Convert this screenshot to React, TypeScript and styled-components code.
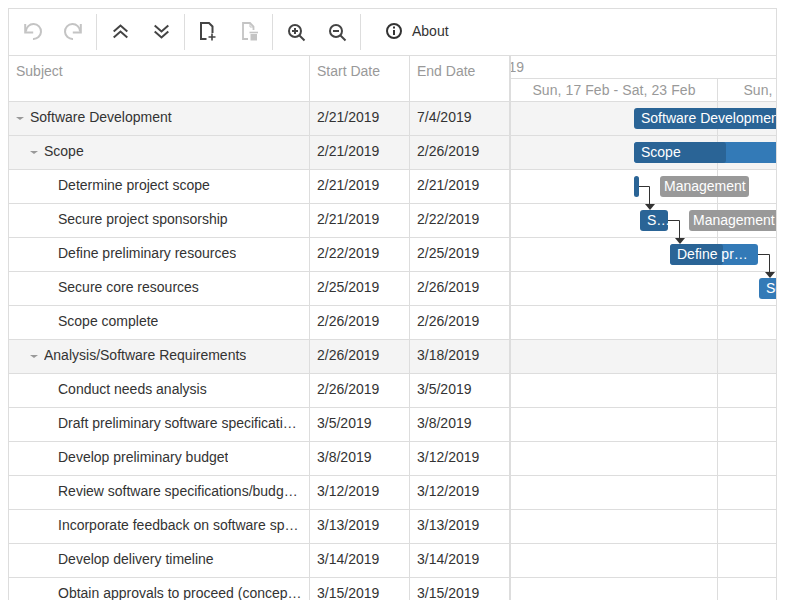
import React from 'react';
import styled, { createGlobalStyle } from 'styled-components';

const GlobalStyle = createGlobalStyle`
  html, body {
    height: 100%;
    margin: 0;
    overflow: hidden;
    background: #fff;
  }
  body {
    padding: 8px;
    box-sizing: border-box;
    font-family: "Liberation Sans", Arial, sans-serif;
    font-size: 14px;
    color: #333;
  }
`;

const Shell = styled.div`
  width: 769px;
  height: 700px;
  box-sizing: border-box;
  border: 1px solid #ddd;
`;

const Toolbar = styled.div`
  height: 47px;
  box-sizing: border-box;
  display: flex;
  align-items: center;
  border-bottom: 1px solid #ddd;
`;

const ToolGroup = styled.div`
  display: flex;
  height: 36px;
  padding: 0 2px 0 3px;
  border-right: 1px solid #ddd;
`;

const ToolButton = styled.div<{ $off?: boolean }>`
  width: 41px;
  padding-bottom: 1px;
  box-sizing: border-box;
  display: flex;
  align-items: center;
  justify-content: center;
  color: ${p => (p.$off ? '#c4c4c4' : '#444')};
`;

const AboutButton = styled.div`
  display: flex;
  align-items: center;
  gap: 9px;
  margin-left: 24px;
  padding-bottom: 2px;
  color: #333;
`;

const Body = styled.div`
  display: flex;
`;

const GridPane = styled.div`
  width: 500px;
  flex: none;
`;

const Splitter = styled.div`
  width: 2px;
  flex: none;
  background: #ddd;
`;

const RowLine = styled.div<{ $group?: boolean; $head?: boolean }>`
  display: grid;
  grid-template-columns: 301px 100px 99px;
  height: ${p => (p.$head ? '46px' : '34px')};
  box-sizing: border-box;
  border-bottom: 1px solid #ddd;
  background: ${p => (p.$group ? '#f4f4f4' : '#fff')};
`;

const Cell = styled.div<{ $head?: boolean; $last?: boolean }>`
  display: flex;
  align-items: flex-start;
  min-width: 0;
  padding: 7px 7px 0;
  line-height: 16px;
  box-sizing: border-box;
  border-right: ${p => (p.$last ? 'none' : '1px solid #ddd')};
  color: ${p => (p.$head ? '#999' : '#333')};
`;

const SubjectCell = styled(Cell)<{ $level: number }>`
  padding-left: ${p => 7 + p.$level * 14}px;
`;

const Caret = styled.span`
  flex: none;
  width: 0;
  height: 0;
  margin: 8px 6px 0 0;
  border-left: 4px solid transparent;
  border-right: 4px solid transparent;
  border-top: 3px solid #999;
`;

const CellText = styled.span`
  min-width: 0;
  white-space: nowrap;
  overflow: hidden;
  text-overflow: ellipsis;
`;

const ChartPane = styled.div`
  position: relative;
  flex: 1;
  min-width: 0;
  overflow: hidden;
`;

const TierTop = styled.div`
  height: 23px;
  box-sizing: border-box;
  border-bottom: 1px solid #ddd;
  color: #999;
  line-height: 22px;
`;

const YearClip = styled.div`
  width: 13px;
  display: flex;
  justify-content: flex-end;
  overflow: hidden;
`;

const TierBottom = styled.div`
  height: 23px;
  box-sizing: border-box;
  display: grid;
  grid-template-columns: repeat(2, 207px);
  border-bottom: 1px solid #ddd;
  color: #999;
  line-height: 22px;
`;

const WeekCell = styled.div`
  text-align: center;
  white-space: nowrap;
  letter-spacing: 0.08px;
  border-right: 1px solid #ddd;
`;

const ChartRow = styled.div<{ $group?: boolean }>`
  height: 34px;
  box-sizing: border-box;
  display: grid;
  grid-template-columns: repeat(2, 207px);
  border-bottom: 1px solid #ddd;
  background: ${p => (p.$group ? '#f4f4f4' : '#fff')};
`;

const WeekSlot = styled.div`
  border-right: 1px solid #ddd;
`;

const Canvas = styled.div`
  position: absolute;
  left: 0;
  top: 46px;
  right: 0;
  bottom: 0;
`;

const Bar = styled.div<{ $row: number; $left: number; $width: number; $tone: 'dark' | 'light' | 'grey' }>`
  position: absolute;
  left: ${p => p.$left}px;
  top: ${p => p.$row * 34 + 6}px;
  width: ${p => p.$width}px;
  height: 21px;
  border-radius: 3px;
  overflow: hidden;
  background: ${p => (p.$tone === 'dark' ? '#2a6496' : p.$tone === 'light' ? '#337ab7' : '#999')};
  color: #fff;
`;

const BarFill = styled.div<{ $width: number }>`
  position: absolute;
  left: 0;
  top: 0;
  bottom: 0;
  width: ${p => p.$width}px;
  border-radius: 3px;
  background: #2a6496;
`;

const BarLabel = styled.div<{ $tight?: boolean }>`
  position: relative;
  padding-left: ${p => (p.$tight ? '4px' : '7px')};
  padding-right: ${p => (p.$tight ? '0' : '7px')};
  line-height: 21px;
  white-space: nowrap;
  overflow: hidden;
  text-overflow: ellipsis;
`;

const Links = styled.svg`
  position: absolute;
  left: 0;
  top: 0;
  overflow: visible;
`;

const Undo = () => (
  <svg width="21" height="21" viewBox="0 0 21 21" fill="none" stroke="currentColor" strokeWidth="2">
    <path d="M4 10.5A7.5 7.5 0 1 1 11 18" />
    <path d="M3.2 3v8.5h8" />
  </svg>
);

const Redo = () => (
  <svg width="21" height="21" viewBox="0 0 21 21" fill="none" stroke="currentColor" strokeWidth="2">
    <path d="M17 10.5A7.5 7.5 0 1 0 10 18" />
    <path d="M17.8 3v8.5h-8" />
  </svg>
);

const Chevrons = ({ up }: { up?: boolean }) => (
  <svg width="21" height="21" viewBox="0 0 21 21" fill="none" stroke="currentColor" strokeWidth="2">
    {up ? (
      <path d="M3.7 10.5l6.8-6 6.8 6M3.7 16.5l6.8-6 6.8 6" />
    ) : (
      <path d="M3.7 4.5l6.8 6 6.8-6M3.7 10.5l6.8 6 6.8-6" />
    )}
  </svg>
);

const AddDoc = () => (
  <svg width="21" height="21" viewBox="0 0 21 21" fill="none" stroke="currentColor" strokeWidth="2">
    <path d="M8.5 18H3V2h8l3.5 3.5V12" />
    <path d="M14 12.5v7M10.5 16h7" strokeWidth="1.6" />
  </svg>
);

const RemoveDoc = () => (
  <svg width="21" height="21" viewBox="0 0 21 21" fill="none" stroke="currentColor" strokeWidth="1.8">
    <path d="M9 18H4V2h7l3.5 3.5V9" />
    <path d="M11 2v4h3.5" strokeWidth="1" />
    <path d="M10.5 11.5h8.5" strokeWidth="1.6" />
    <path d="M11.5 13h6.5v6.5h-6.5z" fill="currentColor" stroke="none" />
  </svg>
);

const Zoom = ({ plus }: { plus?: boolean }) => (
  <svg width="21" height="21" viewBox="0 0 21 21" fill="none" stroke="currentColor" strokeWidth="2">
    <circle cx="9" cy="10" r="6" />
    <path d="M13.5 14.5l5 5" />
    <path d="M6 10h6" />
    {plus && <path d="M9 7v6" />}
  </svg>
);

const Info = () => (
  <svg width="18" height="18" viewBox="0 0 18 18" fill="none" stroke="currentColor" strokeWidth="2">
    <circle cx="9" cy="9" r="7" />
    <path d="M9 8v5" />
    <path d="M9 4.5v2" />
  </svg>
);

interface ITask {
  subject: string;
  start: string;
  end: string;
  level: number;
  group?: boolean;
}

const tasks: ITask[] = [
  { subject: 'Software Development', start: '2/21/2019', end: '7/4/2019', level: 0, group: true },
  { subject: 'Scope', start: '2/21/2019', end: '2/26/2019', level: 1, group: true },
  { subject: 'Determine project scope', start: '2/21/2019', end: '2/21/2019', level: 3 },
  { subject: 'Secure project sponsorship', start: '2/21/2019', end: '2/22/2019', level: 3 },
  { subject: 'Define preliminary resources', start: '2/22/2019', end: '2/25/2019', level: 3 },
  { subject: 'Secure core resources', start: '2/25/2019', end: '2/26/2019', level: 3 },
  { subject: 'Scope complete', start: '2/26/2019', end: '2/26/2019', level: 3 },
  { subject: 'Analysis/Software Requirements', start: '2/26/2019', end: '3/18/2019', level: 1, group: true },
  { subject: 'Conduct needs analysis', start: '2/26/2019', end: '3/5/2019', level: 3 },
  { subject: 'Draft preliminary software specifications', start: '3/5/2019', end: '3/8/2019', level: 3 },
  { subject: 'Develop preliminary budget', start: '3/8/2019', end: '3/12/2019', level: 3 },
  { subject: 'Review software specifications/budget based on feedback', start: '3/12/2019', end: '3/12/2019', level: 3 },
  { subject: 'Incorporate feedback on software specifications', start: '3/13/2019', end: '3/13/2019', level: 3 },
  { subject: 'Develop delivery timeline', start: '3/14/2019', end: '3/14/2019', level: 3 },
  { subject: 'Obtain approvals to proceed (concept, timeline)', start: '3/15/2019', end: '3/15/2019', level: 3 },
];

const links = [
  { d: 'M128 84.5h10.5v18', tipX: 139, tipY: 102 },
  { d: 'M157 118.5h11.5v18', tipX: 169, tipY: 136 },
  { d: 'M247 152.5h11.5v18', tipX: 259, tipY: 170 },
];

const App = () => (
  <>
    <GlobalStyle />
    <Shell>
      <Toolbar>
        <ToolGroup>
          <ToolButton $off><Undo /></ToolButton>
          <ToolButton $off><Redo /></ToolButton>
        </ToolGroup>
        <ToolGroup>
          <ToolButton><Chevrons up /></ToolButton>
          <ToolButton><Chevrons /></ToolButton>
        </ToolGroup>
        <ToolGroup>
          <ToolButton><AddDoc /></ToolButton>
          <ToolButton $off><RemoveDoc /></ToolButton>
        </ToolGroup>
        <ToolGroup>
          <ToolButton><Zoom plus /></ToolButton>
          <ToolButton><Zoom /></ToolButton>
        </ToolGroup>
        <AboutButton>
          <Info />
          About
        </AboutButton>
      </Toolbar>
      <Body>
        <GridPane>
          <RowLine $head>
            <Cell $head>Subject</Cell>
            <Cell $head>Start Date</Cell>
            <Cell $head $last>End Date</Cell>
          </RowLine>
          {tasks.map(task => (
            <RowLine key={task.subject} $group={task.group}>
              <SubjectCell $level={task.level}>
                {task.group && <Caret />}
                <CellText>{task.subject}</CellText>
              </SubjectCell>
              <Cell>{task.start}</Cell>
              <Cell $last>{task.end}</Cell>
            </RowLine>
          ))}
        </GridPane>
        <Splitter />
        <ChartPane>
          <TierTop>
            <YearClip>2019</YearClip>
          </TierTop>
          <TierBottom>
            <WeekCell>Sun, 17 Feb - Sat, 23 Feb</WeekCell>
            <WeekCell>Sun, 24 Feb - Sat, 2 Mar</WeekCell>
          </TierBottom>
          {tasks.map(task => (
            <ChartRow key={task.subject} $group={task.group}>
              <WeekSlot />
              <WeekSlot />
            </ChartRow>
          ))}
          <Canvas>
            <Bar $row={0} $left={123} $width={160} $tone="dark">
              <BarLabel>Software Development</BarLabel>
            </Bar>
            <Bar $row={1} $left={123} $width={160} $tone="light">
              <BarFill $width={92} />
              <BarLabel>Scope</BarLabel>
            </Bar>
            <Bar $row={2} $left={123} $width={5} $tone="dark" />
            <Bar $row={2} $left={149} $width={89} $tone="grey">
              <BarLabel $tight>Management</BarLabel>
            </Bar>
            <Bar $row={3} $left={129} $width={28} $tone="dark">
              <BarLabel>S…</BarLabel>
            </Bar>
            <Bar $row={3} $left={178} $width={120} $tone="grey">
              <BarLabel $tight>Management</BarLabel>
            </Bar>
            <Bar $row={4} $left={159} $width={88} $tone="light">
              <BarFill $width={53} />
              <BarLabel>Define preliminary resources</BarLabel>
            </Bar>
            <Bar $row={5} $left={248} $width={60} $tone="light">
              <BarLabel>Secure core resources</BarLabel>
            </Bar>
            <Links width="270" height="260">
              {links.map(link => (
                <g key={link.d}>
                  <path d={link.d} fill="none" stroke="#333" strokeWidth="1" />
                  <path d={`M${link.tipX - 5} ${link.tipY}h10l-5 6z`} fill="#333" />
                </g>
              ))}
            </Links>
          </Canvas>
        </ChartPane>
      </Body>
    </Shell>
  </>
);

export default App;
